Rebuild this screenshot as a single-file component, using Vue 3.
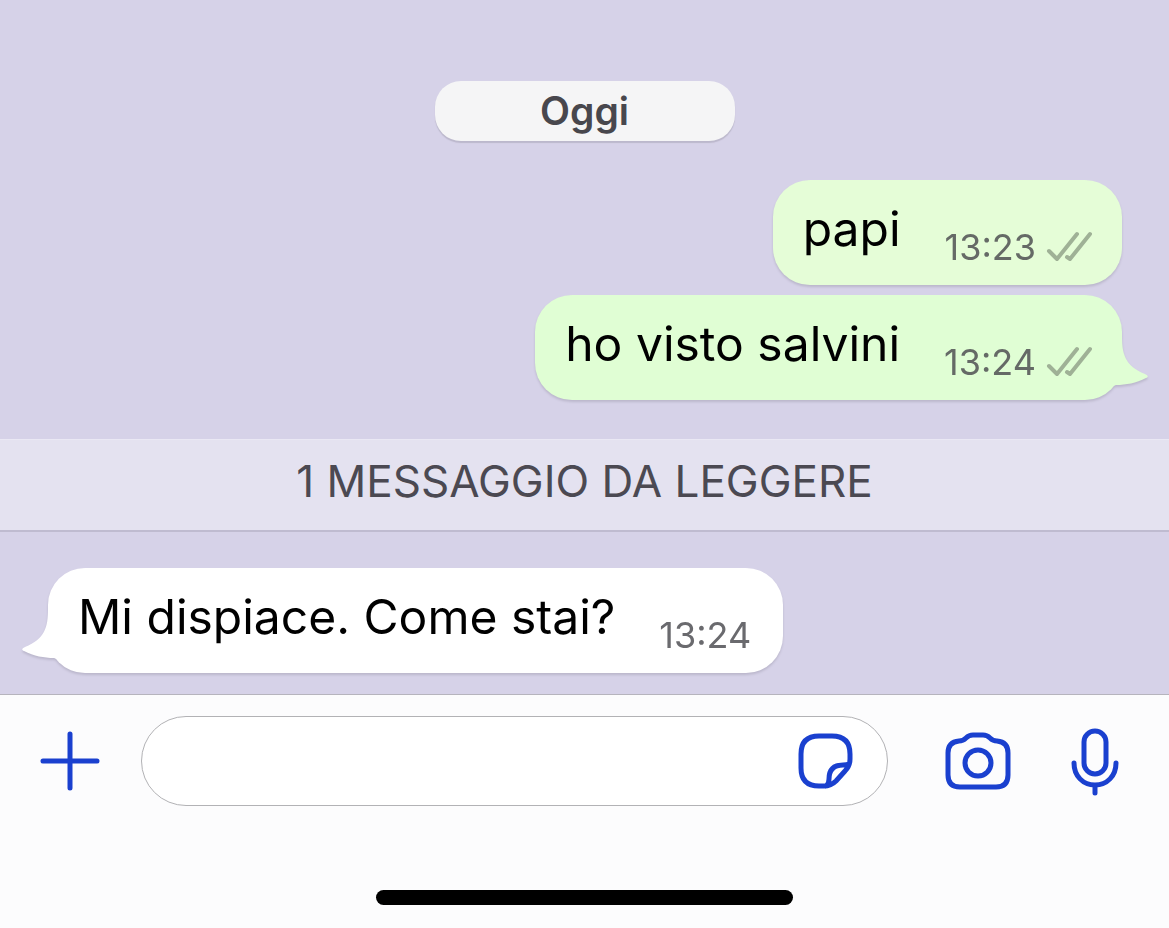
<script setup>
import { ref } from 'vue'

const draft = ref('')
const sent = [
  { text: 'papi', time: '13:23', tail: false },
  { text: 'ho visto salvini', time: '13:24', tail: true },
]
const received = [{ text: 'Mi dispiace. Come stai?', time: '13:24' }]
</script>

<template>
  <div class="screen">
    <main class="chat">
      <div class="day">Oggi</div>

      <div class="group">
        <article v-for="m in sent" :key="m.text" class="bubble out" :class="{ last: m.tail }">
          <svg v-if="m.tail" class="tail tail-out" viewBox="0 0 62 64" aria-hidden="true">
            <path d="M36 0 C36 18 39 30 59 38 C63 40 62 41 60 42 C50 47 40 49 30 49 L0 60 V0 Z" />
          </svg>
          <p class="text">{{ m.text }}</p>
          <span class="meta">
            <time>{{ m.time }}</time>
            <svg class="ticks" viewBox="0 0 46 32" role="img" aria-label="Consegnato">
              <path d="M3 20 L11 28 L31 3 M21 26 L24 28 L44 3" />
            </svg>
          </span>
        </article>
      </div>

      <h2 class="unread">1 MESSAGGIO DA LEGGERE</h2>

      <div class="group incoming">
        <article v-for="m in received" :key="m.text" class="bubble in">
          <svg class="tail tail-in" viewBox="0 0 62 64" aria-hidden="true">
            <path d="M26 0 C26 18 23 30 3 38 C-1 40 0 41 2 42 C12 47 22 49 32 49 L62 60 V0 Z" />
          </svg>
          <p class="text">{{ m.text }}</p>
          <span class="meta"><time>{{ m.time }}</time></span>
        </article>
      </div>
    </main>

    <footer class="footer">
      <form class="composer" @submit.prevent>
        <button type="button" class="icon plus" aria-label="Allega">
          <svg viewBox="0 0 60 60"><path d="M30 3 V57 M3 30 H57" /></svg>
        </button>
        <div class="field">
          <input v-model="draft" type="text" aria-label="Messaggio" />
          <button type="button" class="icon sticker" aria-label="Adesivi">
            <svg viewBox="0 0 56 56">
              <path d="M21 3 H34 Q52 3 52 21 V26 Q52 33 47 38 L38 48 Q33 53 26 53 H21 Q3 53 3 35 V21 Q3 3 21 3 Z M51 31 Q49 32 45 32 Q31 32 31 46 Q31 51 28 53" />
            </svg>
          </button>
        </div>
        <button type="button" class="icon camera" aria-label="Fotocamera">
          <svg viewBox="0 0 66 58">
            <path d="M14 9 Q18 9 21 6 Q24 3 28 3 H38 Q42 3 45 6 Q48 9 52 9 Q63 10 63 21 V43 Q63 55 51 55 H15 Q3 55 3 43 V21 Q3 10 14 9 Z" />
            <circle cx="33" cy="31" r="13" />
          </svg>
        </button>
        <button type="button" class="icon mic" aria-label="Messaggio vocale">
          <svg viewBox="0 0 48 70">
            <rect x="13" y="5" width="22" height="43" rx="11" />
            <path d="M3 37 C3 50 12 59 24 59 C36 59 45 50 45 37 M24 59 V67" />
          </svg>
        </button>
      </form>
      <div class="home"></div>
    </footer>
  </div>
</template>

<style>
body {
  margin: 0;
}
</style>

<style scoped>
.screen {
  display: flex;
  flex-direction: column;
  min-height: 100vh;
  background: #d6d2e8;
  font-family: Inter, "Liberation Sans", sans-serif;
  color: #000;
}
.chat {
  flex: 1;
  display: flex;
  flex-direction: column;
  padding: 81px 0 21px;
}
.day {
  align-self: center;
  width: 300px;
  margin-bottom: 39px;
  border-radius: 26px;
  background: #f5f5f6;
  box-shadow: 0 2px 1px #bcb8cc;
  color: #48474d;
  font-size: 39px;
  font-weight: 600;
  line-height: 60px;
  text-align: center;
}
.group {
  display: flex;
  flex-direction: column;
  gap: 10px;
  padding: 0 47px 0 48px;
}
.bubble {
  position: relative;
  display: flex;
  align-items: flex-start;
  gap: 44px;
  box-sizing: border-box;
  height: 105px;
  padding: 0 30px;
  border-radius: 37px;
  filter: drop-shadow(0 2px 1px #bbb7cc);
}
.out {
  align-self: flex-end;
  background: #e5fdd7;
  fill: #e5fdd7;
}
.out.last {
  background: #e0fed4;
  fill: #e0fed4;
}
.in {
  align-self: flex-start;
  padding-right: 32px;
  background: #fff;
  fill: #fff;
}
.tail {
  position: absolute;
  bottom: 0;
  width: 62px;
  height: 64px;
}
.tail-out {
  right: -26px;
}
.tail-in {
  left: -26px;
}
.text {
  position: relative;
  margin: 0;
  font-size: 48px;
  line-height: 98px;
}
.meta {
  position: relative;
  display: flex;
  align-items: center;
  gap: 10px;
  color: #656a66;
  font-size: 36px;
  line-height: 134px;
}
.in .meta {
  color: #6a6a6e;
}
.ticks {
  width: 46px;
  height: 32px;
  fill: none;
  stroke: #9fb196;
  stroke-width: 4;
  stroke-linecap: round;
  stroke-linejoin: round;
}
.unread {
  margin: 39px 0 36px;
  border-top: 1px solid #eae8f4;
  border-bottom: 2px solid #bfbbd0;
  background: #e4e2f0;
  color: #4b4952;
  font-size: 44px;
  font-weight: 400;
  line-height: 82px;
  height: 90px;
  text-align: center;
}
.footer {
  padding: 21px 0 23px;
  border-top: 1px solid #b6b4bd;
  background: #fcfcfd;
}
.composer {
  display: flex;
  align-items: center;
  padding: 0 50px 0 40px;
}
.icon {
  flex: none;
  padding: 0;
  border: 0;
  background: none;
}
.icon svg {
  display: block;
  width: 100%;
  height: 100%;
  fill: none;
  stroke: #1a40cf;
  stroke-width: 5;
  stroke-linecap: round;
  stroke-linejoin: round;
}
.plus {
  width: 60px;
  height: 60px;
}
.field {
  flex: 1;
  display: flex;
  align-items: center;
  box-sizing: border-box;
  min-width: 0;
  height: 90px;
  margin: 0 57px 0 41px;
  padding: 0 33px;
  border: 1px solid #b2b2b5;
  border-radius: 45px;
  background: #fff;
}
.field input {
  flex: 1;
  min-width: 0;
  height: 80px;
  padding: 0;
  border: 0;
  outline: 0;
  background: none;
  font: inherit;
  font-size: 48px;
}
.sticker {
  width: 56px;
  height: 56px;
}
.camera {
  width: 66px;
  height: 58px;
  margin-right: 60px;
}
.mic {
  width: 48px;
  height: 70px;
}
.home {
  width: 417px;
  height: 15px;
  margin: 84px auto 0;
  border-radius: 8px;
  background: #000;
}
</style>
